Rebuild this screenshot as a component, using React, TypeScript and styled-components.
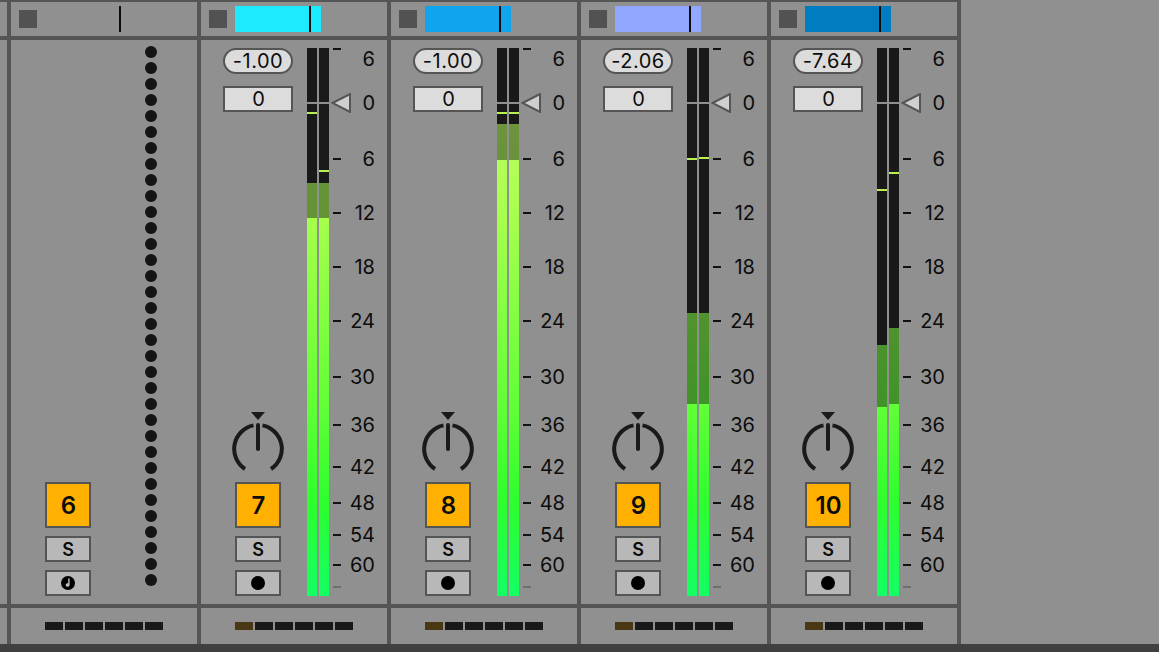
import React from 'react'
import styled, { createGlobalStyle } from 'styled-components'

const METER_TOP = 48
const SCALE = [
  { label: '6', y: 59, tick: 49, dim: false },
  { label: '0', y: 103, tick: 0, dim: false },
  { label: '6', y: 159, tick: 159, dim: false },
  { label: '12', y: 213, tick: 213, dim: false },
  { label: '18', y: 267, tick: 267, dim: false },
  { label: '24', y: 321, tick: 321, dim: false },
  { label: '30', y: 377, tick: 377, dim: false },
  { label: '36', y: 425, tick: 425, dim: false },
  { label: '42', y: 467, tick: 467, dim: false },
  { label: '48', y: 503, tick: 503, dim: false },
  { label: '54', y: 535, tick: 535, dim: false },
  { label: '60', y: 565, tick: 565, dim: false },
  { label: '', y: 587, tick: 587, dim: true },
]

interface IBar {
  peak: number
  dark: number
  bright: number
}
interface IChannel {
  num: number
  color: string
  gain: string
  left: IBar
  right: IBar
}

const Channels: IChannel[] = [
  { num: 7, color: '#1cebff', gain: '-1.00', left: { peak: 113, dark: 183, bright: 218 }, right: { peak: 171, dark: 183, bright: 218 } },
  { num: 8, color: '#10a4ee', gain: '-1.00', left: { peak: 113, dark: 124, bright: 160 }, right: { peak: 113, dark: 124, bright: 160 } },
  { num: 9, color: '#92a7ff', gain: '-2.06', left: { peak: 159, dark: 313, bright: 404 }, right: { peak: 158, dark: 313, bright: 404 } },
  { num: 10, color: '#007dc0', gain: '-7.64', left: { peak: 190, dark: 345, bright: 407 }, right: { peak: 173, dark: 328, bright: 404 } },
]

const App: React.FC = () => {
  return (
    <Page>
      <GlobalStyle />
      <Mixer>
        <Stub />
        <Strip>
          <Header>
            <Stop />
            <Clip>
              <Marker />
            </Clip>
          </Header>
          <Body>
            <Controls>
              <Spacer />
              <TrackButton>6</TrackButton>
              <SmallButton>S</SmallButton>
              <SmallButton>
                <TempoIcon />
              </SmallButton>
            </Controls>
            <Dots>
              {Array.from({ length: 34 }).map((_, i) => (
                <Dot key={i} />
              ))}
            </Dots>
          </Body>
          <Footer>
            <Slots />
          </Footer>
        </Strip>
        {Channels.map((c) => (
          <Strip key={c.num}>
            <Header>
              <Stop />
              <Clip $bg={c.color}>
                <Marker />
              </Clip>
            </Header>
            <Body>
              <Controls>
                <Pill>{c.gain}</Pill>
                <NumberBox>0</NumberBox>
                <Spacer />
                <Knob />
                <TrackButton>{c.num}</TrackButton>
                <SmallButton>S</SmallButton>
                <SmallButton>
                  <RecordDot />
                </SmallButton>
              </Controls>
              <Meter>
                <MeterBar data={c.left} />
                <MeterBar data={c.right} />
                <ZeroLine />
              </Meter>
              <Scale>
                {SCALE.map((s, i) => (
                  <React.Fragment key={i}>
                    {s.tick > 0 && <Tick $dim={s.dim} style={{ top: s.tick - METER_TOP - 1 }} />}
                    {s.label && <ScaleLabel style={{ top: s.y - METER_TOP - 12 }}>{s.label}</ScaleLabel>}
                  </React.Fragment>
                ))}
                <Arrow viewBox="0 0 20 20" width="20" height="20">
                  <polygon points="1.5,10 19,1 19,19" fill="#cfcfcf" stroke="#555" strokeWidth="2" />
                </Arrow>
              </Scale>
            </Body>
            <Footer>
              <Slots $active />
            </Footer>
          </Strip>
        ))}
        <Rest />
      </Mixer>
      <BottomBar />
    </Page>
  )
}

export default App

const MeterBar: React.FC<{ data: IBar }> = ({ data }) => (
  <Bar>
    <DarkGreen style={{ height: data.bright - METER_TOP }} />
    <Black style={{ height: data.dark - METER_TOP }} />
    <Peak style={{ top: data.peak - METER_TOP - 1 }} />
  </Bar>
)

const Knob: React.FC = () => (
  <KnobSvg viewBox="0 0 60 62" width="60" height="62">
    <path d="M23 0h14l-7 8z" fill="#1a1a1a" />
    <path
      d="M25.5 13.4A24 24 0 0 0 17 57M34.5 13.4A24 24 0 0 1 43 57"
      fill="none"
      stroke="#1a1a1a"
      strokeWidth="4"
    />
    <path d="M30 13v24" stroke="#1a1a1a" strokeWidth="4" strokeLinecap="round" />
  </KnobSvg>
)

const TempoIcon: React.FC = () => (
  <svg viewBox="0 0 14 14" width="14" height="14">
    <circle cx="7" cy="7" r="7" fill="#000" />
    <path d="M8.6 2.5v6.2a2 1.7 0 1 1-1.4-1.4V2.5z" fill="#c0c0c0" />
  </svg>
)

const Slots: React.FC<{ $active?: boolean }> = ({ $active }) => (
  <SlotRow>
    {Array.from({ length: 6 }).map((_, i) => (
      <Slot key={i} $on={!!$active && i === 0} />
    ))}
  </SlotRow>
)

const GlobalStyle = createGlobalStyle`
html, body {
  margin: 0;
  padding: 0;
  background: #909090;
}
* {
  box-sizing: border-box;
}
`
const Page = styled.div`
width: 1159px;
height: 652px;
overflow: hidden;
display: flex;
flex-direction: column;
background-color: #909090;
font-family: Inter, "Liberation Sans", Arial, sans-serif;
color: #0c0c0c;
`
const Mixer = styled.div`
display: flex;
height: 644px;
`
const Stub = styled.div`
width: 7px;
background:
  linear-gradient(#555, #555) 0 36px / 100% 4px no-repeat,
  linear-gradient(#555, #555) 0 604px / 100% 4px no-repeat,
  linear-gradient(#555, #555) 0 0 / 100% 2px no-repeat;
`
const Strip = styled.div`
width: 190px;
display: flex;
flex-direction: column;
border-left: 4px solid #555;
`
const Rest = styled.div`
flex: 1;
border-left: 4px solid #555;
`
const Header = styled.div`
height: 40px;
border-top: 2px solid #555;
border-bottom: 4px solid #555;
display: flex;
align-items: center;
padding-left: 8px;
`
const Stop = styled.div`
width: 18px;
height: 18px;
background-color: #525252;
`
const Clip = styled.div<{ $bg?: string }>`
width: 86px;
height: 26px;
margin-left: 8px;
background-color: ${(p) => p.$bg || 'transparent'};
position: relative;
`
const Marker = styled.div`
position: absolute;
left: 74px;
top: 0;
width: 2px;
height: 26px;
background-color: #0c0c0c;
`
const Body = styled.div`
height: 564px;
display: flex;
padding-top: 8px;
`
const Controls = styled.div`
width: 70px;
height: 548px;
margin-left: 22px;
display: flex;
flex-direction: column;
align-items: center;
`
const Spacer = styled.div`
flex: 1;
`
const Pill = styled.div`
width: 70px;
height: 26px;
border: 2px solid #555;
border-radius: 13px;
background-color: #dcdcdc;
display: flex;
align-items: center;
justify-content: center;
font-size: 20px;
letter-spacing: 0.5px;
`
const NumberBox = styled.div`
width: 70px;
height: 26px;
margin-top: 12px;
border: 2px solid #555;
background-color: #dcdcdc;
display: flex;
align-items: center;
justify-content: center;
font-size: 20px;
padding-left: 1px;
`
const KnobSvg = styled.svg`
display: block;
margin-bottom: 8px;
`
const TrackButton = styled.div`
width: 46px;
height: 46px;
border: 2px solid #555;
background-color: #ffb000;
display: flex;
align-items: center;
justify-content: center;
padding-left: 1px;
font-size: 24px;
font-weight: 600;
color: #0c0c0c;
`
const SmallButton = styled.div`
width: 46px;
height: 26px;
margin-top: 8px;
border: 2px solid #555;
background-color: #b8b8b8;
display: flex;
align-items: center;
justify-content: center;
font-size: 18px;
font-weight: 600;
`
const RecordDot = styled.div`
width: 14px;
height: 14px;
border-radius: 50%;
background-color: #000;
`
const Dots = styled.div`
margin-left: 42px;
width: 12px;
height: 548px;
margin-top: -2px;
display: flex;
flex-direction: column;
gap: 4px;
`
const Dot = styled.div`
width: 12px;
height: 12px;
border-radius: 50%;
background-color: #141414;
flex-shrink: 0;
`
const Meter = styled.div`
position: relative;
display: flex;
gap: 2px;
margin-left: 14px;
width: 22px;
height: 548px;
`
const Bar = styled.div`
position: relative;
width: 10px;
height: 548px;
background: linear-gradient(#c0ff60 0%, #b4ff5a 20%, #a6ff4c 31%, #62ff36 65%, #2dff2d 83%, #14ff64 100%);
`
const DarkGreen = styled.div`
position: absolute;
top: 0;
left: 0;
width: 100%;
background-color: rgba(25, 25, 25, 0.47);
`
const Black = styled.div`
position: absolute;
top: 0;
left: 0;
width: 100%;
background-color: #191919;
`
const Peak = styled.div`
position: absolute;
left: 0;
width: 100%;
height: 2px;
background-color: #b8f050;
`
const ZeroLine = styled.div`
position: absolute;
left: 0;
top: 54px;
width: 22px;
height: 2px;
background-color: #8f8f8f;
`
const Scale = styled.div`
position: relative;
width: 50px;
height: 548px;
margin-left: 4px;
`
const Tick = styled.div<{ $dim: boolean }>`
position: absolute;
left: 0;
width: 8px;
height: 2px;
background-color: ${(p) => (p.$dim ? '#6e6e6e' : '#111')};
`
const ScaleLabel = styled.div`
position: absolute;
right: 8px;
line-height: 24px;
font-size: 20px;
color: #0c0c0c;
`
const Arrow = styled.svg`
position: absolute;
left: -2px;
top: 45px;
display: block;
`
const Footer = styled.div`
height: 40px;
border-top: 4px solid #555;
display: flex;
align-items: center;
padding-left: 34px;
`
const SlotRow = styled.div`
display: flex;
gap: 2px;
`
const Slot = styled.div<{ $on: boolean }>`
width: 18px;
height: 8px;
background-color: ${(p) => (p.$on ? '#4a3714' : '#191919')};
`
const BottomBar = styled.div`
height: 8px;
background-color: #404040;
`
